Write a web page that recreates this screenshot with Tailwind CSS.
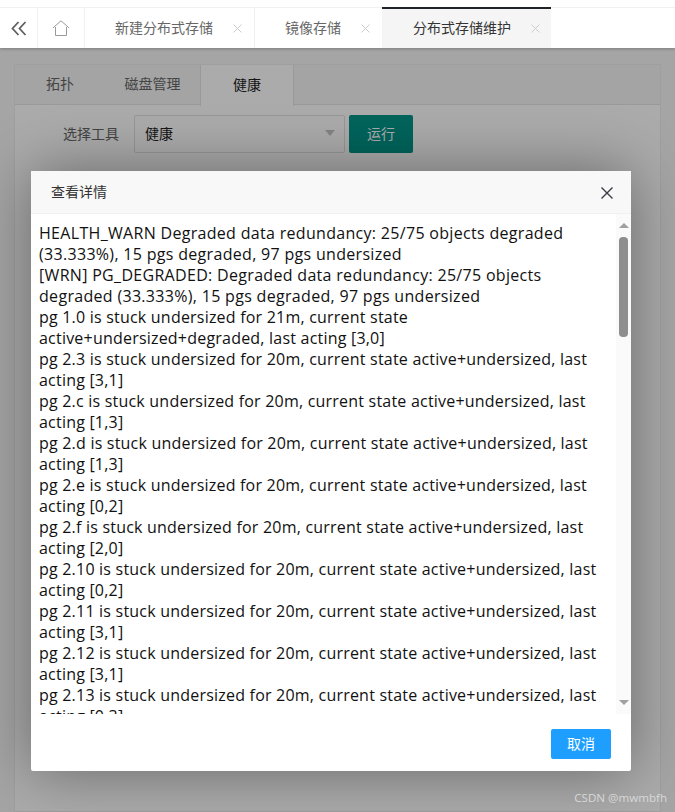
<!doctype html>
<html><head><meta charset="utf-8"><script src="https://cdn.jsdelivr.net/npm/@tailwindcss/browser@4"></script></head>
<body class="relative h-[812px] w-[675px] overflow-hidden bg-[#f5f5f5] font-['Open_Sans','Noto_Sans_CJK_SC',sans-serif]">
<div class="absolute inset-x-0 top-[48px] bottom-0 bg-[#f7f7f7] px-[14px] pt-[16px]">
  <div class="h-full border border-[#eeeeee] bg-white">
    <div class="flex h-[40px] border-b border-[#e4e4e4] bg-[#f5f5f5] pb-[2px] text-[14px] text-[#666]">
      <div class="flex w-[90px] items-center justify-center">拓扑</div>
      <div class="flex w-[95px] items-center justify-center">磁盘管理</div>
      <div class="flex h-[41px] w-[94px] items-center justify-center border-x border-[#e4e4e4] bg-white pb-[2px] text-[#222]">健康</div>
    </div>
    <div class="flex items-center pt-[10px] pl-[48px] text-[14px]">
      <span class="w-[71px] pb-[2px] text-[#666]">选择工具</span>
      <div class="flex h-[38px] w-[211px] items-center justify-between rounded-[2px] border border-[#e0e0e0] bg-white pl-[10px] pr-[9px] pb-[2px] text-[#222]">健康<span class="h-0 w-0 border-x-[5.5px] border-t-[6px] border-x-transparent border-t-[#c4c4c4]"></span></div>
      <button class="ml-[4px] h-[38px] w-[64px] rounded-[2px] bg-[#009688] pb-[2px] text-[14px] text-white">运行</button>
    </div>
  </div>
</div>
<div class="absolute inset-0 bg-black/33"></div>
<header class="absolute inset-x-0 top-0 h-[48px] bg-white shadow-[0_1px_3px_rgba(0,0,0,0.25)]">
  <div class="mt-[7px] flex h-[41px] border-t border-[#f0f0f0] text-[14px] text-[#666]">
    <div class="flex w-[38px] items-center justify-center border-r border-[#f0f0f0]">
      <svg width="16" height="15" viewBox="0 0 16 15" fill="none" stroke="#606060" stroke-width="1.8"><path d="M7.500 1 1.500 7.500l6 6.500M14.500 1 8.500 7.500l6 6.500"/></svg>
    </div>
    <div class="flex w-[47px] items-center justify-center border-r border-[#f0f0f0]">
      <svg width="18" height="16" viewBox="0 0 18 16" fill="none" stroke="#999" stroke-width="1"><path d="M.8 8 9 .8 17.200 8M3.500 7v8.500h11V7"/></svg>
    </div>
    <div class="flex w-[170px] items-center border-r border-[#f0f0f0] pl-[30px]"><span class="w-[98px] shrink-0 pb-[2px]">新建分布式存储</span><span class="ml-[20px]"><svg class="block" width="9" height="9" viewBox="0 0 9 9" stroke="#ccc"><path d="M.5.5l8 8M8.500.5l-8 8"/></svg></span></div>
    <div class="flex w-[127px] items-center pl-[30px]"><span class="w-[56px] shrink-0 pb-[2px]">镜像存储</span><span class="ml-[20px]"><svg class="block" width="9" height="9" viewBox="0 0 9 9" stroke="#ccc"><path d="M.5.5l8 8M8.500.5l-8 8"/></svg></span></div>
    <div class="-mt-[1px] flex h-[41px] w-[169px] items-center border-t-2 border-[#20222a] bg-[#f5f5f5] pl-[31px] text-[#333]"><span class="w-[98px] shrink-0 pb-[2px]">分布式存储维护</span><span class="ml-[20px]"><svg class="block" width="9" height="9" viewBox="0 0 9 9" stroke="#ccc"><path d="M.5.5l8 8M8.500.5l-8 8"/></svg></span></div>
  </div>
</header>
<section class="absolute left-[31px] top-[171px] flex h-[600px] w-[600px] flex-col rounded-[2px] bg-white shadow-[0_0_60px_rgba(0,0,0,0.4)]">
  <div class="flex h-[43px] shrink-0 items-center justify-between border-b border-[#f0f0f0] bg-[#f8f8f8] pl-[20px] pr-[17px] pt-[1px] text-[14px] text-[#333]">
    <span class="pb-[2px]">查看详情</span>
    <svg width="14" height="14" viewBox="0 0 14 14" fill="none" stroke="#3a3a46" stroke-width="1.400"><path d="M1.500 1.500l11 11M12.500 1.500l-11 11"/></svg>
  </div>
  <div class="relative h-[500px] shrink-0 overflow-hidden">
    <div class="w-[576px] pl-[8px] pt-[9px] text-[16px] leading-[21px] tracking-[0.21px] text-[#111]">
      <div class="tracking-[0.31px]">HEALTH_WARN Degraded data redundancy: 25/75 objects degraded (33.333%), 15 pgs degraded, 97 pgs undersized</div>
      <div class="tracking-[0.31px]">[WRN] PG_DEGRADED: Degraded data redundancy: 25/75 objects degraded (33.333%), 15 pgs degraded, 97 pgs undersized</div>
      <div>pg 1.0 is stuck undersized for 21m, current state active+undersized+degraded, last acting [3,0]</div>
      <div>pg 2.3 is stuck undersized for 20m, current state active+undersized, last acting [3,1]</div>
      <div>pg 2.c is stuck undersized for 20m, current state active+undersized, last acting [1,3]</div>
      <div>pg 2.d is stuck undersized for 20m, current state active+undersized, last acting [1,3]</div>
      <div>pg 2.e is stuck undersized for 20m, current state active+undersized, last acting [0,2]</div>
      <div>pg 2.f is stuck undersized for 20m, current state active+undersized, last acting [2,0]</div>
      <div>pg 2.10 is stuck undersized for 20m, current state active+undersized, last acting [0,2]</div>
      <div>pg 2.11 is stuck undersized for 20m, current state active+undersized, last acting [3,1]</div>
      <div>pg 2.12 is stuck undersized for 20m, current state active+undersized, last acting [3,1]</div>
      <div>pg 2.13 is stuck undersized for 20m, current state active+undersized, last acting [0,3]</div>
    </div>
    <div class="absolute inset-y-0 right-0 w-[15px] bg-[#fafafa]">
      <div class="absolute left-[3px] top-[9px] h-0 w-0 border-x-[5px] border-b-[5px] border-x-transparent border-b-[#a0a0a0]"></div>
      <div class="absolute left-[3px] top-[23px] h-[100px] w-[9px] rounded-[4px] bg-[#8e8e8e]"></div>
      <div class="absolute bottom-[9px] left-[3px] h-0 w-0 border-x-[5px] border-t-[5px] border-x-transparent border-t-[#a0a0a0]"></div>
    </div>
  </div>
  <div class="flex flex-1 items-start justify-end pr-[20px] pt-[15px]">
    <button class="h-[30px] w-[60px] rounded-[2px] bg-[#1e9fff] pb-[2px] text-[14px] text-white">取消</button>
  </div>
</section>
<div class="absolute right-[8px] top-[789px] text-[11.6px] text-[#d8d8d8]">CSDN @mwmbfh</div>
</body></html>
